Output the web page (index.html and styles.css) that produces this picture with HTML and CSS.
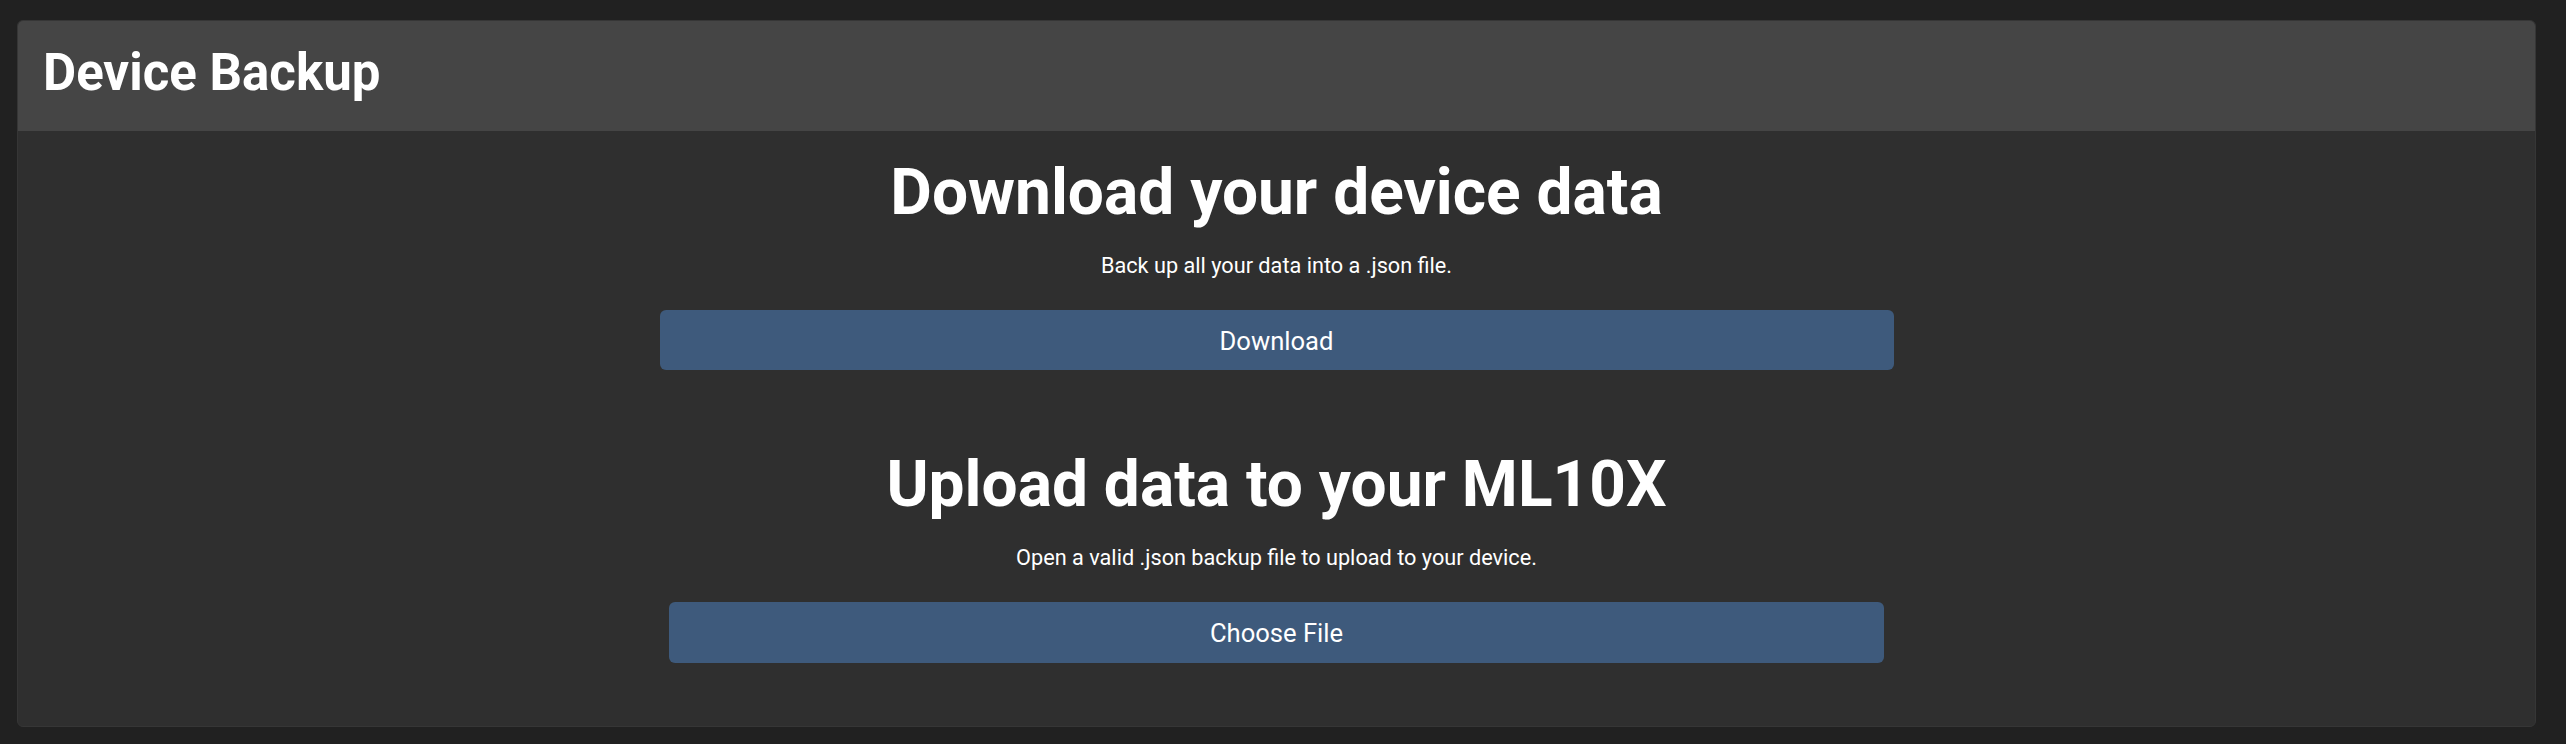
FILE: index.html
```html
<!DOCTYPE html>
<html lang="en">
<head>
  <meta charset="UTF-8">
  <meta name="viewport" content="width=device-width, initial-scale=1.0">
  <title>Device Backup</title>
  <link rel="stylesheet" href="styles.css">
</head>
<body>
  <div class="card">
    <div class="card-header">
      <h2>Device Backup</h2>
    </div>
    <div class="card-body">
      <section class="backup-section">
        <h1>Download your device data</h1>
        <p>Back up all your data into a .json file.</p>
        <button class="btn btn-download" onclick="downloadBackup()">Download</button>
      </section>

      <section class="backup-section upload">
        <h1>Upload data to your ML10X</h1>
        <p>Open a valid .json backup file to upload to your device.</p>
        <label class="btn btn-upload" for="backupFile">Choose File</label>
        <input type="file" id="backupFile" accept=".json">
      </section>
    </div>
  </div>

  <script>
    function downloadBackup() {
      const data = JSON.stringify({ device: 'ML10X' }, null, 2);
      const link = document.createElement('a');
      link.href = URL.createObjectURL(new Blob([data], { type: 'application/json' }));
      link.download = 'backup.json';
      link.click();
    }
  </script>
</body>
</html>
```

FILE: styles.css
```css
body {
  margin: 0;
  padding: 20px 30px 16px 17px;
  background-color: #212121;
  color: #ffffff;
  font-family: Roboto, "Liberation Sans", sans-serif;
}
.card {
  background-color: #2f2f2f;
  border: 1px solid #363636;
  border-radius: 6px;
  overflow: hidden;
}
.card-header {
  background-color: #454545;
  padding: 20px 25px 26px;
}
.card-header h2 {
  margin: 0;
  font-size: 51px;
  line-height: 64px;
  font-weight: 700;
}
.card-body {
  padding: 24px 0 63px;
}
.backup-section {
  display: flex;
  flex-direction: column;
  align-items: center;
  text-align: center;
}
.backup-section h1 {
  margin: 0;
  font-size: 64px;
  line-height: 1.2;
  font-weight: 700;
}
.backup-section p {
  margin: 22px 0 32px;
  font-size: 21.7px;
  line-height: 24px;
}
.upload {
  margin-top: 77px;
}
.btn {
  display: flex;
  align-items: center;
  justify-content: center;
  height: 60px;
  padding: 2px 0 0;
  border: none;
  border-radius: 6px;
  background-color: #3e5a7c;
  color: #ffffff;
  font-family: inherit;
  font-size: 25.6px;
  cursor: pointer;
}
.btn-download {
  width: 1234px;
}
.btn-upload {
  box-sizing: border-box;
  width: 1215px;
  height: 61px;
}
#backupFile {
  display: none;
}
```
